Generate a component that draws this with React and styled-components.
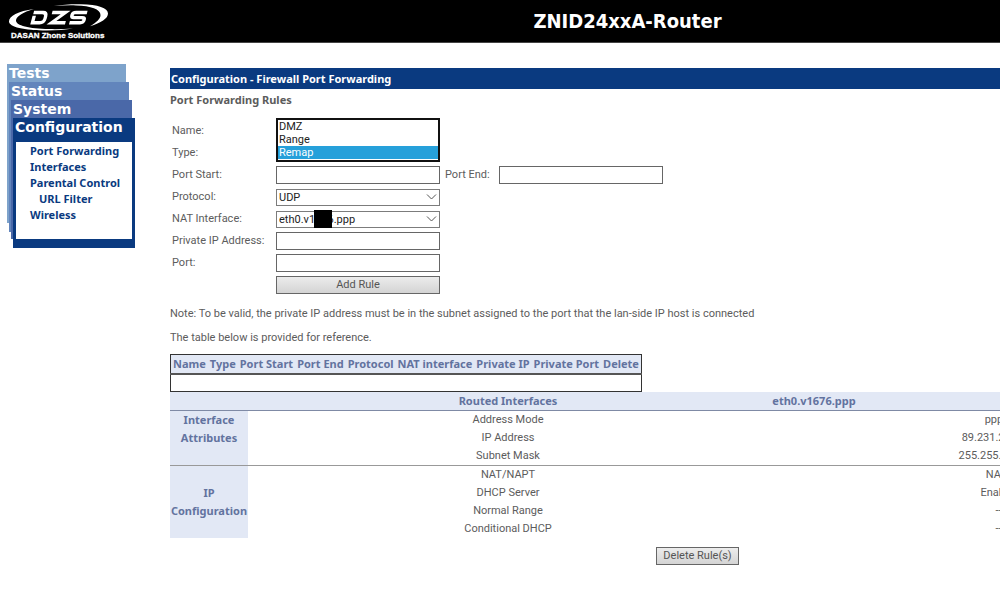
import React from "react";
import styled, { createGlobalStyle } from "styled-components";

const GlobalStyle = createGlobalStyle`
  html {
    overflow: auto;
    scrollbar-width: none;
  }

  body {
    margin: 0;
    background: #fff;
    color: #5c5c5c;
    font: 11px/18px Roboto, "DejaVu Sans Condensed", sans-serif;
  }

  *, *::before, *::after {
    box-sizing: border-box;
  }

  h2, h3, th, nav {
    font-family: "Noto Sans", "DejaVu Sans Condensed", sans-serif;
  }
`;

const Page = styled.div`
  min-width: 1255px;
`;

const Header = styled.header`
  display: grid;
  grid-template-columns: 1fr auto 1fr;
  align-items: center;
  height: 43px;
  background: #000;
  border-bottom: 1px solid #444;
`;

const LogoLink = styled.a`
  display: block;
  width: 120px;
  height: 42px;
`;

const Title = styled.h1`
  margin: 0;
  color: #fff;
  font: bold 20px/24px "DejaVu Sans Condensed", "DejaVu Sans", sans-serif;
`;

const Body = styled.div`
  display: flex;
  padding: 21px 23px 0 7px;
`;

const Sidebar = styled.nav`
  flex: 0 0 163px;
`;

// each section is a coloured sheet, the next one lies on top of it
const Sheet = styled.div`
  width: ${({ $width }) => $width}px;
  height: ${({ $height }) => $height}px;
  padding-left: 2px;
  background: ${({ $color }) => $color};
`;

const SheetLink = styled.a`
  display: block;
  height: ${({ $tall }) => ($tall ? 24 : 18)}px;
  color: #fff;
  font: bold 14px/18px "DejaVu Sans", sans-serif;
  text-decoration: none;
  white-space: nowrap;
`;

const SubMenu = styled.ul`
  height: 97px;
  margin: 0 3px 0 1px;
  padding: 1px 0 0 14px;
  background: #fff;
  list-style: none;
`;

const SubItem = styled.li`
  padding-left: ${({ $nested }) => ($nested ? 9 : 0)}px;
  line-height: 16px;
`;

const SubLink = styled.a`
  color: #0a3a80;
  font-weight: bold;
  text-decoration: none;
  white-space: nowrap;
`;

const Main = styled.main`
  flex: 1;
  min-width: 0;
  padding-top: 4px;
`;

const TitleBar = styled.h2`
  margin: 0;
  padding: 0 1px;
  background: #0a3a80;
  color: #fff;
  font-size: 11px;
  line-height: 21px;
`;

const SubTitle = styled.h3`
  margin: 2px 0 11px;
  font-size: 11px;
  line-height: 18px;
`;

const Form = styled.form`
  display: grid;
  grid-template-columns: 104px 164px 59px 164px;
  grid-auto-rows: 22px;
  align-items: center;
  padding-left: 2px;
`;

const Label = styled.label`
  grid-column: ${({ $second }) => ($second ? 3 : 1)};
  padding-left: ${({ $second }) => ($second ? 5 : 0)}px;
`;

const Field = styled.div`
  position: relative;
  display: flex;
  align-items: center;
  height: 18px;
`;

const Input = styled.input`
  width: 100%;
  height: 18px;
  padding: 0 2px;
  border: 1px solid #666;
  border-radius: 0;
  background: #fff;
  font: inherit;
`;

const Select = styled.select`
  width: 100%;
  height: 17px;
  padding: 0 2px;
  border: 1px solid #7c7c7c;
  border-radius: 0;
  background: #fff;
  color: #222;
  font: inherit;
  line-height: 15px;
  appearance: none;
`;

const Arrow = styled.svg`
  position: absolute;
  top: 6px;
  right: 3px;
  pointer-events: none;
`;

const Redaction = styled.span`
  position: absolute;
  top: 0;
  left: 38px;
  width: 18px;
  height: 18px;
  background: #000;
`;

const OpenList = styled.select`
  position: absolute;
  left: 0;
  bottom: 0;
  z-index: 1;
  width: 100%;
  height: 44px;
  padding: 0;
  overflow: hidden;
  border: 2px solid #111;
  border-radius: 0;
  outline: 0;
  background: #fff;
  font: inherit;

  option {
    height: 13px;
    min-height: 13px;
    padding: 0 1px;
    color: #222;
    line-height: 13px;
  }

  option:checked {
    background: linear-gradient(#26a0da, #26a0da);
    -webkit-text-fill-color: #fff;
  }
`;

const Button = styled.button`
  height: 18px;
  padding: 0 6px;
  border: 1px solid #666;
  border-radius: 0;
  background: linear-gradient(#ececec, #d4d4d4);
  color: #555;
  font: inherit;
  line-height: 16px;
`;

const AddButton = styled(Button)`
  grid-column: 2;
`;

const Note = styled.p`
  margin: ${({ $first }) => ($first ? 9 : 6)}px 0 0;
`;

const RulesTable = styled.table`
  margin-top: 7px;
  border: 1px solid #333;
  border-collapse: collapse;

  th {
    padding: 0 2px;
    border-bottom: 2px solid #555;
    background: #e2e8f5;
    color: #62739f;
    line-height: 18px;
    white-space: nowrap;
  }

  td {
    height: 17px;
    padding: 0;
  }
`;

const InterfaceTable = styled.table`
  width: 100%;
  border-collapse: collapse;
  table-layout: fixed;
  text-align: center;

  th {
    padding: 0;
    background: #e2e8f5;
    color: #62739f;
  }

  td {
    height: 18px;
    padding: 0;
  }

  thead th {
    height: 19px;
    border-bottom: 1px solid #7f8aa5;
  }

  tbody + tbody tr:first-child > * {
    border-top: 1px solid #999;
  }
`;

const GroupHead = styled.th`
  vertical-align: ${({ $align }) => $align};
`;

const Actions = styled.div`
  display: flex;
  justify-content: center;
  padding: 9px 7px 20px 0;
`;

const menu = [
  { label: "Port Forwarding" },
  { label: "Interfaces" },
  { label: "Parental Control" },
  { label: "URL Filter", nested: true },
  { label: "Wireless" },
];

const columns = [
  "Name",
  "Type",
  "Port Start",
  "Port End",
  "Protocol",
  "NAT interface",
  "Private IP",
  "Private Port",
  "Delete",
];

const groups = [
  {
    title: ["Interface", "Attributes"],
    align: "top",
    rows: [
      ["Address Mode", "pppoe"],
      ["IP Address", "89.231.214.106"],
      ["Subnet Mask", "255.255.255.255"],
    ],
  },
  {
    title: ["IP", "Configuration"],
    align: "middle",
    rows: [
      ["NAT/NAPT", "NAPT"],
      ["DHCP Server", "Enabled"],
      ["Normal Range", "---"],
      ["Conditional DHCP", "---"],
    ],
  },
];

const Logo = () => (
  <svg width="120" height="42" viewBox="0 0 120 42" role="img" aria-label="DZS">
    <g fill="#fff">
      <path d="M34 9C18 11 9 16 9 21.500c0 5.500 15 9 38 9 10 0 19-.7 26-2-8 .6-16 .8-24 .6-20-.5-33-3.500-33-8.600 0-4 7-8.500 18-11.500z" />
      <path d="M54 6c9-1.500 18-2 27-1.800C98 4.500 108 8 108 13.500c0 5-7 9.500-18 12.700 7-4 10.500-7.500 10.500-11.200C100.500 9 91 5.800 76 5.400 68 5.200 61 5.500 54 6z" />
    </g>
    <g
      fill="none"
      stroke="#fff"
      strokeWidth="3.400"
      transform="translate(5.500 0) skewX(-15)"
    >
      <path d="M31.500 12.500h9q4 0 4 4v2.300q0 4-4 4h-7.500v-7" />
      <path d="M50 12.500h13.500L52 22.700H66" />
      <path d="M85 12.500H73.500q-3 0-3 2.500t3 2.600h7.500q3 0 3 2.500t-3 2.600H70" />
    </g>
    <text
      x="11"
      y="38"
      fill="#fff"
      fontFamily="Liberation Sans, sans-serif"
      fontSize="8"
      fontWeight="bold"
      stroke="#fff"
      strokeWidth=".3"
    >
      DASAN Zhone Solutions
    </text>
  </svg>
);

const Chevron = () => (
  <Arrow width="11" height="6" viewBox="0 0 11 6" aria-hidden="true">
    <path d="M1 .5l4.500 4.500L10 .5" fill="none" stroke="#555" />
  </Arrow>
);

const SideMenu = () => (
  <Sidebar>
    <Sheet $color="#7ea3cb" $width={119} $height={159}>
      <SheetLink href="#tests">Tests</SheetLink>
      <Sheet $color="#6285bc" $width={120} $height={150}>
        <SheetLink href="#status">Status</SheetLink>
        <Sheet $color="#4a68a8" $width={121} $height={139}>
          <SheetLink href="#system">System</SheetLink>
          <Sheet $color="#0a3a80" $width={122} $height={130}>
            <SheetLink href="#configuration" $tall>
              Configuration
            </SheetLink>
            <SubMenu>
              {menu.map(({ label, nested }) => (
                <SubItem key={label} $nested={nested}>
                  <SubLink href="#menu">{label}</SubLink>
                </SubItem>
              ))}
            </SubMenu>
          </Sheet>
        </Sheet>
      </Sheet>
    </Sheet>
  </Sidebar>
);

const RuleForm = () => (
  <Form onSubmit={(e) => e.preventDefault()}>
    <Label htmlFor="name">Name:</Label>
    <Field>
      <Input id="name" />
    </Field>

    <Label htmlFor="type">Type:</Label>
    <Field>
      <OpenList id="type" size={3} defaultValue="Remap">
        <option>DMZ</option>
        <option>Range</option>
        <option>Remap</option>
      </OpenList>
    </Field>

    <Label htmlFor="start">Port Start:</Label>
    <Field>
      <Input id="start" />
    </Field>
    <Label htmlFor="end" $second>
      Port End:
    </Label>
    <Field>
      <Input id="end" />
    </Field>

    <Label htmlFor="protocol">Protocol:</Label>
    <Field>
      <Select id="protocol">
        <option>UDP</option>
      </Select>
      <Chevron />
    </Field>

    <Label htmlFor="nat">NAT Interface:</Label>
    <Field>
      <Select id="nat">
        <option>eth0.v1676.ppp</option>
      </Select>
      <Redaction />
      <Chevron />
    </Field>

    <Label htmlFor="address">Private IP Address:</Label>
    <Field>
      <Input id="address" />
    </Field>

    <Label htmlFor="port">Port:</Label>
    <Field>
      <Input id="port" />
    </Field>

    <AddButton type="submit">Add Rule</AddButton>
  </Form>
);

const Interfaces = () => (
  <InterfaceTable>
    <colgroup>
      <col width="78" />
      <col width="520" />
      <col width="92" />
      <col />
    </colgroup>
    <thead>
      <tr>
        <th />
        <th>Routed Interfaces</th>
        <th>eth0.v1676.ppp</th>
        <th />
      </tr>
    </thead>
    {groups.map(({ title, align, rows }) => (
      <tbody key={title[1]}>
        {rows.map(([name, value], i) => (
          <tr key={name}>
            {i === 0 && (
              <GroupHead rowSpan={rows.length} $align={align}>
                {title[0]}
                <br />
                {title[1]}
              </GroupHead>
            )}
            <td>{name}</td>
            <td colSpan={2}>{value}</td>
          </tr>
        ))}
      </tbody>
    ))}
  </InterfaceTable>
);

const App = () => (
  <Page>
    <GlobalStyle />
    <Header>
      <LogoLink href="#home">
        <Logo />
      </LogoLink>
      <Title>ZNID24xxA-Router</Title>
    </Header>
    <Body>
      <SideMenu />
      <Main>
        <TitleBar>Configuration - Firewall Port Forwarding</TitleBar>
        <SubTitle>Port Forwarding Rules</SubTitle>
        <RuleForm />
        <Note $first>
          Note: To be valid, the private IP address must be in the subnet
          assigned to the port that the lan-side IP host is connected
        </Note>
        <Note>The table below is provided for reference.</Note>
        <RulesTable>
          <thead>
            <tr>
              {columns.map((name) => (
                <th key={name}>{name}</th>
              ))}
            </tr>
          </thead>
          <tbody>
            <tr>
              <td colSpan={columns.length} />
            </tr>
          </tbody>
        </RulesTable>
        <Interfaces />
        <Actions>
          <Button type="button">Delete Rule(s)</Button>
        </Actions>
      </Main>
    </Body>
  </Page>
);

export default App;
